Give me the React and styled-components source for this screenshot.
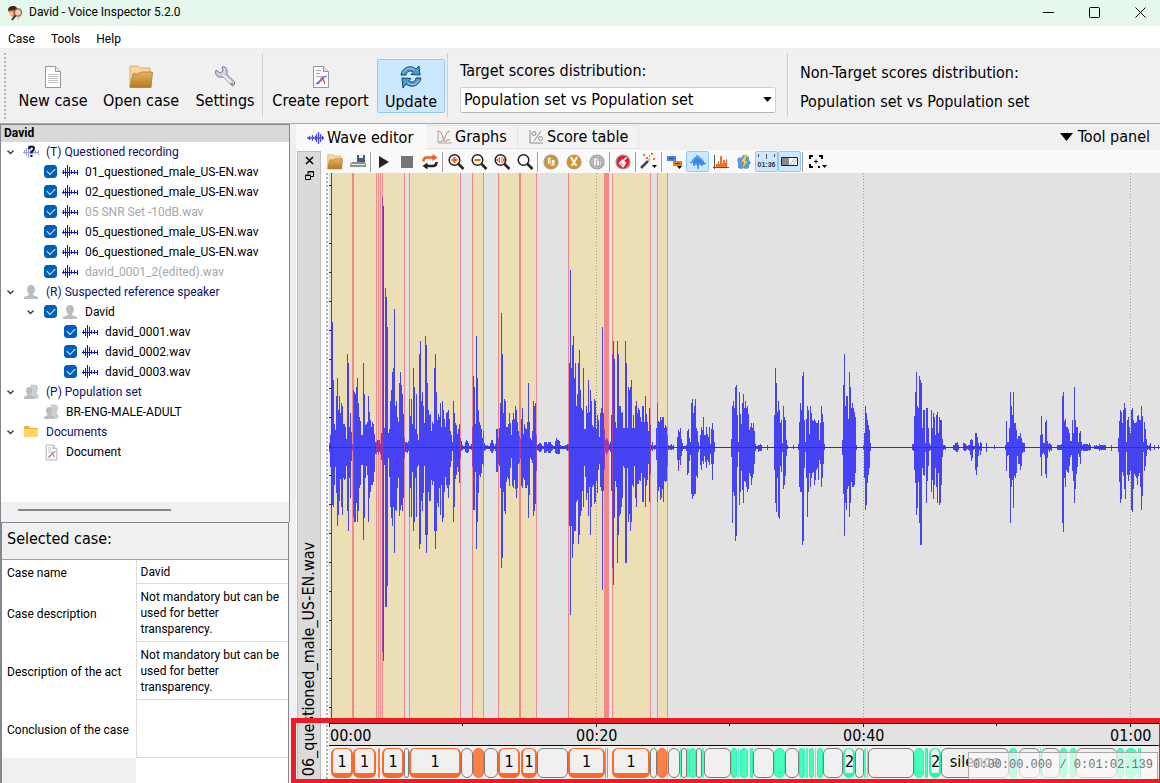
import React from 'react';
import styled, { createGlobalStyle } from 'styled-components';

const UI = 'Roboto, "Noto Sans", sans-serif';
const WIDE = '"DejaVu Sans Condensed", "Noto Sans", sans-serif';

const GlobalStyle = createGlobalStyle`
  * { box-sizing: border-box; }
  body { margin: 0; background: #f0f0f0; color: #000; font: 12px/20px ${UI}; }
  button, select, input { font: inherit; color: inherit; margin: 0; }
  svg { display: block; }
`;

/* ---------- window chrome ---------- */

const Window = styled.div`
  display: flex;
  flex-direction: column;
  min-height: 100vh;
`;

const TitleBar = styled.header`
  display: flex;
  align-items: center;
  height: 26px;
  padding-left: 7px;
  background: #e6f8ee;
`;

const Title = styled.h1`
  flex: 1;
  margin: 0 0 0 6px;
  font-size: 12px;
  font-weight: 400;
  line-height: 22px;
  padding-bottom: 2px;
`;

const WindowButton = styled.button`
  display: flex;
  align-items: center;
  justify-content: center;
  width: 46px;
  height: 24px;
  padding: 0 0 2px;
  border: 0;
  background: none;
`;

const Controls = styled.div`
  display: flex;
  margin-right: -3px;
`;

const MenuBar = styled.nav`
  display: flex;
  height: 23px;
  background: #fff;
  border-bottom: 1px solid #ececec;
`;

const MenuItem = styled.button`
  padding: 2px 8px 0;
  border: 0;
  background: none;
  line-height: 22px;
`;

const MainToolbar = styled.div`
  display: flex;
  align-items: flex-start;
  height: 75px;
  padding: 4px 0 0 4px;
  border-bottom: 1px solid #a9a9a9;
  font: 16px/20px ${WIDE};
`;

const Grip = styled.span`
  width: 2px;
  height: 66px;
  margin-right: 6px;
  background: repeating-linear-gradient(#b9b9b9 0 2px, transparent 2px 4px);
`;

const ToolButton = styled.button`
  display: flex;
  flex-direction: column;
  align-items: center;
  width: ${(p) => p.$width}px;
  height: 54px;
  margin: 6px 2px 0;
  padding: 5px 0 0;
  border: 1px solid ${(p) => (p.$pressed ? '#90c8f6' : 'transparent')};
  border-radius: 2px;
  background: ${(p) => (p.$pressed ? '#cce8ff' : 'none')};
  white-space: nowrap;
  gap: ${(p) => (p.$pressed ? 3 : 2)}px;
`;

const ToolSeparator = styled.span`
  width: 1px;
  height: 64px;
  margin: 0 3px 0 0;
  background: #cfcfcf;
`;

const ScoreGroup = styled.div`
  display: flex;
  flex-direction: column;
  padding: ${(p) => p.$top}px 11px 0 9px;
  gap: ${(p) => p.$gap}px;
  white-space: nowrap;
`;

const SelectBox = styled.div`
  position: relative;
  width: 316px;

  select {
    width: 100%;
    height: 26px;
    padding: 0 24px 0 3px;
    border: 1px solid #d0d0d0;
    border-bottom-color: #b5b5b5;
    border-radius: 3px;
    background: #fff;
    appearance: none;
  }
  svg { position: absolute; right: 4px; top: 10px; pointer-events: none; }
`;

/* ---------- left column ---------- */

const Body = styled.div`
  display: flex;
  flex: 1;
`;

const Sidebar = styled.aside`
  display: flex;
  flex-direction: column;
  flex: 0 0 290px;
`;

const TreePanel = styled.section`
  display: flex;
  flex-direction: column;
  height: 398px;
  border: solid #828790;
  border-width: 1px 1px 0;
  background: #fff;
`;

const TreeTitle = styled.h2`
  margin: 0;
  padding: 0 3px;
  height: 17px;
  background: #d9d9d9;
  font-size: 12px;
  font-weight: 700;
  line-height: 16px;
`;

const Tree = styled.ul`
  flex: 1;
  margin: 0;
  padding: 0;
  list-style: none;
`;

const TreeRow = styled.li`
  display: flex;
  align-items: center;
  height: 20px;
  padding-left: ${(p) => p.$level * 20}px;
  color: ${(p) => (p.$muted ? '#a6a6a6' : p.$heading ? '#10106e' : '#000')};
  white-space: nowrap;
`;

const Chevron = styled.button`
  display: flex;
  justify-content: center;
  width: 19px;
  padding: 0;
  border: 0;
  background: none;
  visibility: ${(p) => (p.$shown ? 'visible' : 'hidden')};
`;

const RowLabel = styled.label`
  display: flex;
  align-items: center;
`;

const IconSlot = styled.span`
  display: flex;
  width: 17px;
  margin: 0 6px 0 3px;
`;

const Check = styled.input.attrs({ type: 'checkbox' })`
  appearance: none;
  display: grid;
  place-items: center;
  width: 13px;
  height: 13px;
  border-radius: 3px;
  border: 1px solid #8a8a8a;
  && { margin: 0 2px 1px 4px; }
  &:checked { background: #005fb8; border-color: #005fb8; }
  &:checked::after {
    content: '';
    width: 7px;
    height: 4px;
    border: solid #e6f0fa;
    border-width: 0 0 1px 1px;
    transform: translateY(-1px) rotate(-45deg);
  }
`;

const ScrollBar = styled.div`
  height: 20px;
  padding: 7px 17px;
  background: #f0f0f0;
  &::before {
    content: '';
    display: block;
    width: 153px;
    height: 2px;
    background: #858585;
  }
`;

const CasePanel = styled.section`
  display: flex;
  flex-direction: column;
  flex: 1;
  margin-right: 1px;
  border: solid #828790;
  border-width: 1px 1px 0 2px;
  background: linear-gradient(90deg, #f0f0f0 134px, #fff 134px);
`;

const CaseTitle = styled.h2`
  margin: 0;
  height: 37px;
  padding: 6px 5px;
  border-bottom: 1px solid #a0a0a0;
  background: #f0f0f0;
  font: 16px/20px ${WIDE};
`;

const CaseTable = styled.table`
  width: 100%;
  border-collapse: collapse;
  table-layout: fixed;
  background: #fff;
  line-height: 16px;

  th, td {
    height: 58px;
    padding: 2px 0 0 4px;
    border: 1px solid #dcdcdc;
    border-top: 0;
    font-weight: 400;
    text-align: left;
    vertical-align: middle;
  }
  th { width: 134px; border-width: 0 1px 0 0; padding: 3px 4px 0 5px; white-space: nowrap; }
  td { border-right: 0; }
  tr:first-child th, tr:first-child td { height: 23px; }
`;

/* ---------- right column ---------- */

const Workspace = styled.main`
  position: relative;
  display: flex;
  flex-direction: column;
  flex: 1;
  min-width: 0;
  margin-left: 6px;
`;

const TabBar = styled.div`
  display: flex;
  align-items: flex-end;
  height: 27px;
  padding-bottom: 1px;
  border-bottom: 1px solid #fafafa;
  font: 16px/20px ${WIDE};
`;

const Tab = styled.button`
  display: flex;
  align-items: center;
  gap: 3px;
  width: ${(p) => p.$width}px;
  height: ${(p) => (p.$active ? 27 : 24)}px;
  margin-bottom: ${(p) => (p.$active ? -2 : 0)}px;
  padding: 0 0 0 10px;
  border: 1px solid ${(p) => (p.$active ? '#fafafa' : '#e5e5e5')};
  border-left-width: ${(p) => (p.$active ? 1 : 0)}px;
  background: ${(p) => (p.$active ? '#fafafa' : '#f3f3f3')};
  white-space: nowrap;
`;

const ToolPanelButton = styled.button`
  display: flex;
  align-items: center;
  gap: 5px;
  margin-left: auto;
  padding: 0 10px 2px 0;
  border: 0;
  background: none;
`;

const Dock = styled.div`
  display: flex;
  flex: 1;
  padding-left: 1px;
  background: #fafafa;
`;

const DockTitle = styled.div`
  display: flex;
  flex-direction: column;
  justify-content: space-between;
  align-items: center;
  width: 24px;
  padding: 2px 0 6px;
  border: 1px solid #bdbdbd;
  background: #dadada;
`;

const DockButtons = styled.div`
  display: flex;
  flex-direction: column;
  gap: 2px;
  button {
    display: flex;
    padding: 2px;
    border: 0;
    background: none;
  }
`;

const DockName = styled.span`
  writing-mode: vertical-rl;
  transform: rotate(180deg);
  font: 16px/20px ${WIDE};
  white-space: nowrap;
`;

const Editor = styled.div`
  display: flex;
  flex-direction: column;
  flex: 1;
  min-width: 0;
`;

const WaveToolbar = styled.div`
  display: flex;
  height: 22px;
  padding-left: 2px;
`;

const WaveButton = styled.button`
  display: flex;
  align-items: center;
  justify-content: center;
  width: ${(p) => (p.$menu ? 29 : 23)}px;
  height: 21px;
  padding: 0;
  border: 1px solid ${(p) => (p.$pressed ? '#90c8f6' : 'transparent')};
  border-radius: 2px;
  background: ${(p) => (p.$pressed ? '#cce8ff' : 'none')};
`;

const WaveSeparator = styled.span`
  width: 1px;
  height: 20px;
  margin: 1px;
  background: #a0a0a0;
`;

const PlotRow = styled.div`
  display: flex;
  flex: 1;
`;

const PlotGrip = styled.span`
  width: 8px;
  background: repeating-linear-gradient(#b4b4b4 0 2px, transparent 2px 4px) 5px 0 / 2px 100% no-repeat;
`;

const PlotColumn = styled.div`
  display: flex;
  flex-direction: column;
  flex: 1;
  min-width: 0;
  padding-bottom: 4px;
  background: #e2e2e2;
`;

const Plot = styled.svg`
  width: 100%;
  flex: 1 1 400px;
  min-height: 0;
`;

const Ruler = styled.div`
  position: relative;
  display: flex;
  height: 23px;
  padding-left: 1px;
  border: solid #000;
  border-width: 1px 0;
  font: 16px/24px ${WIDE};
  svg { position: absolute; left: 0; top: 0; width: 100%; height: 3px; }
`;

const RulerLabel = styled.span`
  flex: ${(p) => p.$span} 0 0;
`;

const Segments = styled.div`
  display: grid;
  grid-template-columns: ${(p) => p.$spans.map((n) => `minmax(0, ${n}fr)`).join(' ')};
  height: 33px;
  padding: 2px 0 1px 2px;
  background: #f0f0f0;
`;

const tones = {
  voice: { edge: '#fb6a2c', fill: '#fd8048' },
  other: { edge: '#2cf2ae', fill: '#46fdbb' },
  quiet: { edge: '#7b7b7b', fill: '#f0f0f0' },
};

const Segment = styled.span`
  height: 30px;
  border-style: solid;
  border-color: ${(p) => tones[p.$tone].edge};
  border-width: ${(p) => (p.$label && p.$tone !== 'quiet' ? '1px 2px 5px' : p.$span < 3 ? '0' : '1px')};
  border-radius: ${(p) => (p.$span > 8 ? 6 : p.$span > 4 ? 4 : 1)}px;
  background: ${(p) => (p.$label ? '#f0f0f0' : tones[p.$tone].fill)};
  font: 16px/26px ${WIDE};
  text-align: center;
  white-space: nowrap;
`;

const Clock = styled.output`
  position: absolute;
  right: 2px;
  bottom: 4px;
  width: 190px;
  height: 27px;
  border: 1px solid #a8a8a8;
  border-bottom: 0;
  background: rgba(250, 250, 250, 0.7);
  color: #737373;
  font: 12px/24px "Liberation Mono", monospace;
  text-align: center;
`;

const Highlight = styled.div`
  position: absolute;
  left: -5px;
  right: 0;
  bottom: 0;
  height: 65px;
  border: solid #ed1c24;
  border-width: 5px 1px 4px 5px;
  pointer-events: none;
`;

/* ---------- icons ---------- */

const AppIcon = () => (
  <svg width="16" height="16" viewBox="0 0 16 16">
    <path d="M1 5c0-3 3-4.500 6-4 2.500.5 3.500 2 3 3.500L7 6.500 2 7z" fill="#4b2416" />
    <path d="M1 6l5-1 3 3-2 4-3-1z" fill="#f08a4c" />
    <path d="M2 7l3 4 1-3z" fill="#fbd3b5" />
    <circle cx="11" cy="7.500" r="3.600" fill="#f7c9a8" stroke="#7b6a62" strokeWidth="1.300" />
    <path d="M8.500 10.500L5 15" stroke="#333" strokeWidth="2" />
    <path d="M11 12v3M13 11v2" stroke="#f4a06c" />
  </svg>
);

const Triangle = ({ width = 9, height = 5 }) => (
  <svg width={width} height={height} viewBox="0 0 10 6"><path d="M0 0h10L5 6z" fill="#000" /></svg>
);

const PageIcon = ({ chart, size = 24 }) => (
  <svg width={size} height={size} viewBox="0 0 24 24">
    <path d="M4.500 1.500h10l5 5v16h-15z" fill="#fdfdfd" stroke="#979797" />
    <path d="M14.500 1.500v5h5" fill="#e4e4e4" stroke="#979797" />
    {chart ? (
      <g fill="none">
        <path d="M7 5.500h5M7 8.500h4M7 11.500h9" stroke="#aaa" />
        <path d="M8 19q3-1 4-5t4 5" stroke="#f04848" strokeWidth="1.300" />
        <path d="M7 19l4-3q2 0 4-4l3-1" stroke="#6a6af4" strokeWidth="1.300" />
      </g>
    ) : (
      <path d="M7 9.500h10M7 11.500h10M7 13.500h10M7 15.500h10M7 17.500h10" stroke="#c4c4c4" />
    )}
  </svg>
);

const FolderIcon = ({ size = 24 }) => (
  <svg width={size} height={size} viewBox="0 0 24 24">
    <defs>
      <linearGradient id="folderFront" x1="0" y1="0" x2="0" y2="1">
        <stop offset="0" stopColor="#e2b266" /><stop offset="1" stopColor="#b87a1e" />
      </linearGradient>
    </defs>
    <path d="M1 22V1h8l2 2h10v5H5z" fill="#f3d7a3" stroke="#cfa15a" strokeWidth=".8" />
    <path d="M1 22.500L4 9h6l2-2h11.500l-1.500 15.500z" fill="url(#folderFront)" stroke="#b47a26" strokeWidth=".8" />
  </svg>
);

const WrenchIcon = () => (
  <svg width="24" height="24" viewBox="0 0 24 24">
    <path d="M3 5l4 3 3-2-1-4q4-1 5 3 .5 3-.5 4l8 8q1 3-2 4l-9-9q-7 1-8-4z" fill="#cfd2dc" stroke="#777a85" />
    <path d="M10 10l8 8" stroke="#f6f6fa" strokeWidth="1.500" />
    <circle cx="19" cy="19" r="1" fill="#777" />
  </svg>
);

const RefreshIcon = () => (
  <svg width="24" height="24" viewBox="0 0 24 24">
    <path d="M2 10C3 3 11-1 17 4l3-3 1 9-9-.5 2.500-2.500C11 5 8 6 7 10z" fill="#4c9ad2" stroke="#174467" />
    <path d="M22 13c-1 7-9 11-15 6l-3 4-1-10 9 .5L9.500 16c3.500 2 6.500 1 7.500-3z" fill="#4c9ad2" stroke="#174467" />
    <path d="M4 8c2-5 8-6 12-3M20 15c-2 5-8 6-11 3" fill="none" stroke="#9fd0ee" />
  </svg>
);

const MiniWave = ({ faded }) => (
  <svg width="16" height="16" viewBox="0 0 16 16" shapeRendering="crispEdges">
    <path
      d="M0 8h16M1.500 6v4M3.500 4v8M5.500 1v13M7.500 3v9M9.500 6v4M12.500 6v4M15.500 6v5"
      stroke={faded ? '#9a9aee' : '#1414b4'}
    />
    {faded && (
      <path d="M6 5q0-2.500 2.500-2.500t2.500 2q0 1.500-2.500 3.500v1.500M8.500 11v2" fill="none" stroke="#111" strokeWidth="2" shapeRendering="auto" />
    )}
  </svg>
);

const PersonIcon = ({ group }) => (
  <svg width="16" height="16" viewBox="0 0 16 16" fill="#bdbdbd">
    {group && <path d="M8 1h4q3 0 2.500 4L13 9l2 2v3H8z" fill="#cfcfcf" stroke="#b3b3b3" strokeWidth=".5" />}
    <path d={group
      ? 'M6 3q3 0 3 3.500 0 2-1.500 3.500v1l4.500 2v2H1v-2l3.500-2v-1Q3 9 3 6.500 3 3 6 3z'
      : 'M8 1q4 0 4 4.500Q12 8 10 10v1l5 2v2H1v-2l5-2v-1Q4 8 4 5.500 4 1 8 1z'} />
  </svg>
);

const YellowFolder = () => (
  <svg width="16" height="14" viewBox="0 0 16 14">
    <path d="M1 2q0-1 1-1h4l1 2h8v4H1z" fill="#f0b02a" />
    <path d="M1 4h14v8H1z" fill="#ffd567" />
  </svg>
);

const ChevronIcon = () => (
  <svg width="7" height="5" viewBox="0 0 7 5"><path d="M.5.5l3 3 3-3" fill="none" stroke="#333" strokeWidth="1.300" /></svg>
);

const TabWave = () => (
  <svg width="17" height="14" viewBox="0 0 17 14">
    <path d="M0 7h17M2.500 5v4M5.500 4v6M8.500 5v4M11.500 1v12M13.500 3v8M9.500 3v8M15.500 5v4" stroke="#4a4af0" strokeWidth="1.300" />
  </svg>
);

const TabGraph = () => (
  <svg width="16" height="14" viewBox="0 0 16 14" fill="none">
    <path d="M2 0v13h14" stroke="#aaa" />
    <path d="M3 1q3 2 4 7t3 3 4-1" stroke="#f06a6a" />
    <path d="M14 1q-4 1-5 6t-6 5" stroke="#6aba6a" />
  </svg>
);

const TabPercent = () => (
  <svg width="16" height="14" viewBox="0 0 16 14" fill="none" stroke="#8a8a8a">
    <path d="M2 0v13h13M13 1L6 11" />
    <circle cx="6" cy="3.500" r="2" /><circle cx="12.500" cy="8.500" r="2" />
  </svg>
);

const Lens = ({ children }) => (
  <svg width="18" height="18" viewBox="0 0 18 18" fill="none">
    <circle cx="7.500" cy="7" r="5.300" stroke="#222" strokeWidth="1.500" fill="#fff" />
    <path d="M11.500 11l5 5" stroke="#222" strokeWidth="2.500" />
    <g stroke="#fb5a14" strokeWidth="2">{children}</g>
  </svg>
);

const Disc = ({ fill, children }) => (
  <svg width="16" height="16" viewBox="0 0 16 16">
    <circle cx="8" cy="8" r="7" fill={fill} stroke="#9c9c9c" strokeWidth="1.200" />
    {children}
  </svg>
);

const icons = {
  open: <FolderIcon size={16} />,
  save: (
    <svg width="16" height="14" viewBox="0 0 16 14">
      <path d="M7 0h8v7H7z" fill="#3f5f82" /><path d="M9 0h4v3H9z" fill="#e8eef4" />
      <path d="M2 7h13l1 2v3H0V9z" fill="#8a8f94" /><path d="M1 9h14v1H1z" fill="#e8e8e8" /><path d="M10 11h3" stroke="#4be04b" />
    </svg>
  ),
  play: <svg width="12" height="14" viewBox="0 0 12 14"><path d="M1 1l10 6-10 6z" fill="#222" /></svg>,
  stop: <svg width="12" height="12" viewBox="0 0 12 12"><path d="M0 0h12v12H0z" fill="#757575" /></svg>,
  loop: (
    <svg width="16" height="16" viewBox="0 0 16 16" fill="none" strokeWidth="2.500">
      <path d="M1.500 7.500q0-4 3.500-4h6" stroke="#fb5a14" /><path d="M10.500 0v7L15.500 3.500z" fill="#fb5a14" />
      <path d="M14.500 8q0 4-3.500 4H5" stroke="#222" /><path d="M5.500 8.500v7L.5 12z" fill="#222" />
    </svg>
  ),
  zoomIn: <Lens><path d="M4.500 7h6M7.500 4v6" /></Lens>,
  zoomOut: <Lens><path d="M4.500 7h6" /></Lens>,
  zoomSelection: <Lens><path d="M6.500 4v6M9 4v6" strokeWidth="1" /><path d="M3.500 7h2M10 7h2" strokeWidth="3" /></Lens>,
  zoomAll: <Lens />,
  copy: <Disc fill="#dc931e"><path d="M4.500 3.500h4v7h-4zM7 5.500h5v6.500H7z" fill="#f5f0e2" stroke="#b89350" strokeWidth=".7" /></Disc>,
  cut: <Disc fill="#dc931e"><path d="M5 3l3 5.500L11 3M8 8v1.500" fill="none" stroke="#fff" strokeWidth="1.800" /><path d="M5.500 11.500L8 9l2.500 2.500" fill="none" stroke="#fff" strokeWidth="1.800" /></Disc>,
  paste: <Disc fill="#bebebe"><path d="M4.500 4h6v8h-6zM7.500 6h4.500v6.500H7.500z" fill="#f1f1f1" stroke="#999" strokeWidth=".7" /></Disc>,
  erase: <Disc fill="#ea1c2c"><path d="M11.500 3.500L8 7M4.500 9l3-3 3 3-2.500 3.500z" fill="#fff" stroke="#fff" strokeWidth="1.500" /><path d="M6 9.500l2 2" stroke="#ea1c2c" /></Disc>,
  wand: (
    <svg width="18" height="17" viewBox="0 0 18 17">
      <path d="M1 15L8 8" stroke="#444" strokeWidth="2.500" /><path d="M8 8l2-2" stroke="#bbb" strokeWidth="2.500" />
      <path d="M3 2h2M11 1h2M13 6h2M6 5h2M9 3h1" stroke="#fb6a2c" strokeWidth="2" /><path d="M12 12h5l-2.500 3z" fill="#000" />
    </svg>
  ),
  labels: (
    <svg width="18" height="15" viewBox="0 0 18 15">
      <path d="M1 2h9v5H1z" fill="#4a7cf2" /><path d="M7 7h9v5H7z" fill="#f07a14" />
      <path d="M3 4.500h5" stroke="#24489c" /><path d="M9 9.500h5" stroke="#8a3c00" /><path d="M11 12h5l-2.500 3z" fill="#000" />
    </svg>
  ),
  waveform: (
    <svg width="16" height="16" viewBox="0 0 16 16">
      <path d="M0 9l2-1 1-2 1 6 1-9 1 8 1-10 1 14L9 2l1 9 1-7 1 8 1-5 1 3 2-1" fill="none" stroke="#3c84e8" strokeWidth="1.300" />
    </svg>
  ),
  spectrum: (
    <svg width="16" height="16" viewBox="0 0 16 16">
      <path d="M1.500 1v14M0 13.500h16" stroke="#555" />
      <path d="M3 13v-3h2V7h1v3h1V2h2v7h1V6h2v3h1V5h1v8z" fill="#fb6a2c" />
    </svg>
  ),
  flash: (
    <svg width="16" height="16" viewBox="0 0 16 16">
      <path d="M1 6l2-3 2 1 2-3 3 1 3 1v3l2 3-2 2v3l-3 1-3-1-2 1-3-1V9z" fill="#5a96ea" />
      <path d="M9 1L5 8h3l-2 7 6-8H9l2-6z" fill="#ffd83c" stroke="#a8862a" strokeWidth=".5" />
    </svg>
  ),
  fill: (
    <svg width="17" height="9" viewBox="0 0 17 9">
      <path d="M.5.5h16v8H.5z" fill="#fff" stroke="#222" /><path d="M1 1h7v7H1z" fill="#8a8a8a" />
      <path d="M9 8l5-7M12 8l4-6" stroke="#888" strokeWidth=".7" />
    </svg>
  ),
  expand: (
    <svg width="19" height="15" viewBox="0 0 19 15" fill="none">
      <path d="M1 5V2h3M10 2h3v3M1 10v3h3M9 13h2" stroke="#000" strokeWidth="2" />
      <path d="M5 7.500h4M7 5.500v4" stroke="#000" /><path d="M13 11h5l-2.500 3z" fill="#000" />
    </svg>
  ),
};

const TimeGlyph = styled.span`
  display: flex;
  flex-direction: column;
  align-items: center;
  gap: 2px;
  font: 700 7px/8px "Liberation Sans", sans-serif;
  color: #333;
`;

const TimeIcon = () => (
  <TimeGlyph>
    <svg width="17" height="5" viewBox="0 0 17 5"><path d="M.5 0v3M8.500 0v5M16.500 0v3" stroke="#555" /></svg>
    01:36
  </TimeGlyph>
);

/* ---------- data ---------- */

const treeRows = [
  { text: '(T) Questioned recording', level: 0, heading: true, open: true, icon: <MiniWave faded /> },
  { text: '01_questioned_male_US-EN.wav', level: 1, check: true, icon: <MiniWave /> },
  { text: '02_questioned_male_US-EN.wav', level: 1, check: true, icon: <MiniWave /> },
  { text: '05 SNR Set -10dB.wav', level: 1, check: true, muted: true, icon: <MiniWave /> },
  { text: '05_questioned_male_US-EN.wav', level: 1, check: true, icon: <MiniWave /> },
  { text: '06_questioned_male_US-EN.wav', level: 1, check: true, icon: <MiniWave /> },
  { text: 'david_0001_2(edited).wav', level: 1, check: true, muted: true, icon: <MiniWave /> },
  { text: '(R) Suspected reference speaker', level: 0, heading: true, open: true, icon: <PersonIcon /> },
  { text: 'David', level: 1, check: true, open: true, icon: <PersonIcon /> },
  { text: 'david_0001.wav', level: 2, check: true, icon: <MiniWave /> },
  { text: 'david_0002.wav', level: 2, check: true, icon: <MiniWave /> },
  { text: 'david_0003.wav', level: 2, check: true, icon: <MiniWave /> },
  { text: '(P) Population set', level: 0, heading: true, open: true, icon: <PersonIcon group /> },
  { text: 'BR-ENG-MALE-ADULT', level: 1, icon: <PersonIcon group /> },
  { text: 'Documents', level: 0, heading: true, open: true, icon: <YellowFolder /> },
  { text: 'Document', level: 1, icon: <PageIcon chart size={17} /> },
];

const caseFields = [
  ['Case name', 'David'],
  ['Case description', 'Not mandatory but can be used for better transparency.'],
  ['Description of the act', 'Not mandatory but can be used for better transparency.'],
  ['Conclusion of the case', ''],
];

const waveTools = [
  ['open', 'Open'], ['save', 'Save'], null,
  ['play', 'Play'], ['stop', 'Stop'], ['loop', 'Loop'], null,
  ['zoomIn', 'Zoom in'], ['zoomOut', 'Zoom out'], ['zoomSelection', 'Zoom to selection'], ['zoomAll', 'Show all'], null,
  ['copy', 'Copy'], ['cut', 'Cut'], ['paste', 'Paste'], null,
  ['erase', 'Erase'], null,
  ['wand', 'Effects'], null,
  ['labels', 'Labels'], ['waveform', 'Waveform', true], ['spectrum', 'Spectrum'], ['flash', 'Energy'],
  ['time', 'Time axis', true], ['fill', 'Segments', true], null,
  ['expand', 'Fit view', false, true],
];

/* Each run: first column, then the peak above and below the axis per column. */
const runs = [
  [-1, '4/4 12/19 8/8'],
  [2, '125/57 67/59 23/37 17/19 51/45 69/78 37/67 51/53 34/31 44/59'],
  [12, '41/67 23/30 23/32 20/31 8/18 93/63 84/83 20/30 34/50 15/13'],
  [22, '3/3 57/69 55/74 53/74 60/55 69/74 44/63 30/40 26/37 12/17'],
  [32, '12/17 84/92 53/70 22/30 23/18 25/27 51/74 35/50 27/44 20/37'],
  [42, '25/37 23/34 13/24 5/6 5/6 7/4 7/7 7/4 3/6 14/12'],
  [52, '250/204 241/213 19/17 159/159 150/159 120/138 14/10 18/29 46/59 57/70'],
  [62, '75/78 79/59 138/105 41/62 46/63 30/40 25/30 64/68 75/62 62/57'],
  [72, '53/63 33/50 9/10 5/4 5/4 4/5 6/3 48/69 31/40 48/69'],
  [82, '23/24 79/83 60/74 18/30 53/69 13/19 7/17 93/101 106/96 46/53'],
  [92, '55/63 41/45 24/18 111/87 102/105 64/87 37/44 32/53 33/53 16/32'],
  [102, '25/37 23/33 79/83 93/101 55/83 27/55 33/59 30/40 44/67 20/37'],
  [112, '46/74 37/70 28/44 20/29 34/37 35/40 37/50 28/37 16/19 12/13'],
  [122, '5/3 46/74 34/59 24/31 22/27 13/19 18/24 23/35 9/10 6/3'],
  [132, '2/2 1/1 1/1 5/4 7/5 6/5 4/4 1/1 1/1 3/2'],
  [142, '20/19 71/62 60/62 23/24 111/101 69/74 37/45 25/27 22/29 18/25'],
  [152, '9/16 16/18 4/3 2/2 1/1 2/1 1/1 1/1 4/3 7/5'],
  [162, '7/5 4/3 1/1 3/3 18/24 18/24 9/16 19/18 44/40 134/120'],
  [172, '93/110 34/44 48/63'],
  [175, '46/66 20/34 20/29 23/31 34/38 24/20 12/10 27/38 34/40 28/32'],
  [185, '41/41 37/50 25/40 16/16 11/15 8/11 28/38 39/40 13/30 23/32'],
  [195, '19/40 18/40 25/37 64/70 25/47 9/10 7/12 16/15 46/68 41/63'],
  [205, '44/56 12/23 2/2 3/3 4/4 4/4 3/3 1/1 1/1 5/5'],
  [215, '5/5 5/4 3/3 5/5 5/5 5/5 3/3 2/2 1/1 1/1'],
  [225, '6/5 9/6 7/6 7/6 6/6 2/1 1/1 1/1 1/1 1/1'],
  [235, '2/1 2/2 3/3 3/3 84/78 177/167 79/78 102/110 111/96 69/83'],
  [245, '84/83 41/54 53/52 84/96 97/87 57/68 39/63 37/43 79/59 18/18'],
  [255, '18/29 41/52 34/45 67/68 35/39 57/87 46/59 22/39 20/37 48/56'],
  [265, '46/54 18/33 32/45 27/22 10/16 34/39 39/43 120/142 34/43 18/22'],
  [275, '7/4 9/7 8/5 6/3 3/2 5/4 32/43 93/120 106/137 88/70'],
  [285, '25/33 19/39 106/115 93/87 41/68 41/66 34/59 35/50 19/18 19/20'],
  [295, '106/115 84/115 19/20 60/74 57/66 60/83 67/74 19/37 32/39 19/18'],
  [305, '41/50 46/59 34/36 39/36 37/32 30/33 25/25 41/54 41/54 25/30'],
  [315, '51/59 33/38 25/32 16/16 39/54 22/26 2/2 5/3 1/1 2/2'],
  [325, '2/1 19/12 44/54 26/43 25/39 30/52 27/50 30/41 30/54 19/33'],
  [335, '22/34 20/33 12/18 2/2 1/1 2/2 3/2 1/1 2/2'],
  [347, '10/12 17/23 15/12 19/17 8/8 4/3 1/1 1/1 1/1 2/3'],
  [357, '16/27 18/25 9/13 5/7 44/46 48/51 34/48 41/46 48/46 19/28'],
  [367, '16/30 5/4 1/1 12/17 20/22 17/13 30/16 12/8 12/14 20/20'],
  [377, '13/12 10/14 20/17 3/6 18/16 24/32 17/16 5/4'],
  [401, '8/9 41/75 46/44 39/48 60/93 62/88 32/19 5/4 55/57 33/44'],
  [411, '23/23 44/42 53/55 39/33 46/34 39/39 41/44 33/41 17/25 20/28'],
  [421, '24/37 19/30 24/26 16/16 3/3 1/1 1/1 2/4 2/3 3/3 2/3'],
  [437, '2/2'],
  [444, '32/22 79/55 64/64 35/30 46/69 37/71 24/18 27/24 4/4 41/41'],
  [454, '30/37 27/28 7/8 2/1'],
  [463, '2/1'],
  [468, '3/2 25/39 44/44 37/44 71/97 75/93 27/20 5/4 28/30 41/69'],
  [478, '37/44 13/25 41/39 34/30 27/25 26/24 28/37 26/32 24/22 24/20'],
  [488, '27/32 7/12 24/16 41/39 33/30 25/16 3/2'],
  [512, '7/7 62/46 93/88 41/55 51/62 51/41 28/38 75/69 60/55 39/34'],
  [522, '44/39 39/39 35/37 30/25 2/2'],
  [533, '2/2 14/30 41/62 34/57 27/35 22/27 17/20 4/3'],
  [582, '3/2 3/3 31/22 55/35 75/67 41/60 39/34 71/75 67/97 64/97'],
  [592, '19/20 37/27 37/28 4/4 39/55 39/33 19/18 4/3 2/2 37/44'],
  [602, '19/32 34/51 30/37 12/20 32/39 35/55 14/25 30/57 27/55 27/37'],
  [612, '8/9 2/2 2/1 1/2'],
  [623, '2/2 2/2 4/3 4/4 5/4 2/2'],
  [633, '4/2 4/3 3/3 2/2 1/1 2/2 2/3 7/7 8/13 7/10'],
  [643, '1/2 1/1 14/22 14/27 10/19 4/8 1/2 5/7 4/3'],
  [656, '4/4'],
  [664, '2/1'],
  [675, '2/2 26/23 5/8 5/7 19/30 55/75 41/39 32/32 55/60 24/28'],
  [685, '24/30 17/25 8/8 11/16 11/16 14/22 9/18 5/5 4/4 4/4'],
  [710, '12/9 31/28 13/6 4/5 4/7 25/26 27/30 6/10 3/2 4/4 3/2 2/3'],
  [727, '2/2 2/2 2/2 2/2 3/2 51/75 55/84 26/30 28/39 20/22'],
  [737, '20/24 18/25 14/18 6/9 6/7 27/23 14/33 60/55 27/41 20/26'],
  [747, '20/19 5/6 14/9 16/16 5/3 2/2 3/3 3/3 3/3 3/3 3/3 2/2 4/3 2/2'],
  [764, '2/1 1/1 2/1 1/1 1/1 3/3 2/2 2/2 2/2 2/2 2/2 2/2'],
  [781, '2/3'],
  [788, '9/4 26/34 37/55 35/51 24/24 37/28 44/41 39/51 5/4 27/27'],
  [798, '30/33 20/27 14/23 37/62 39/64 27/41 24/26 24/28 25/30 31/37'],
  [808, '32/28 27/25 27/39 41/62 31/48 5/4 25/23 18/18 8/8 2/2 1/1 2/2 4/3'],
  [824, '2/2'],
  [828, '2/1'],
];

const AXIS = 274;
const wavePath = runs
  .map(([start, peaks]) =>
    peaks
      .split(' ')
      .map((pair, i) => {
        const [up, down] = pair.split('/').map(Number);
        return `M${start + i} ${AXIS - up}h1v${up + down + 1}h-1z`;
      })
      .join('')
  )
  .join('');

const voiced = [[1, 74], [79, 51], [142, 11], [168, 38], [238, 41], [282, 38], [327, 10]];
const marks = [
  [22, 2], [46, 1], [48, 1], [50, 1], [52, 1], [74, 1], [79, 1], [130, 1], [142, 1], [153, 1],
  [168, 1], [189, 2], [206, 1], [238, 1], [274, 5], [282, 1], [320, 1], [327, 1], [337, 1],
];
const axisTicks = Array.from({ length: 19 }, (_, i) => 12 + i * 29);

/* tone, width, label */
const segments = [
  ['voice', 22, '1'], ['voice', 23, '1'], ['gap', 2], ['voice', 2], ['gap', 2], ['voice', 22, '1'], ['quiet', 5],
  ['voice', 52, '1'], ['quiet', 12], ['voice', 11], ['quiet', 14], ['voice', 22, '1'], ['gap', 1], ['voice', 16, '1'],
  ['quiet', 31], ['voice', 37, '1'], ['voice', 1], ['gap', 1], ['voice', 1], ['gap', 4], ['voice', 38, '1'],
  ['quiet', 7], ['voice', 10], ['other', 1], ['quiet', 12], ['other', 1], ['quiet', 6], ['other', 2], ['other', 7],
  ['quiet', 6], ['other', 2], ['quiet', 27], ['other', 6], ['gap', 1], ['other', 1], ['gap', 1], ['other', 8],
  ['gap', 2], ['other', 3], ['quiet', 21], ['other', 11], ['quiet', 14], ['other', 5], ['other', 1], ['gap', 1],
  ['other', 2], ['gap', 1], ['other', 5], ['gap', 1], ['other', 1], ['gap', 1], ['other', 6], ['quiet', 20],
  ['other', 12, '2'], ['quiet', 9], ['other', 2], ['gap', 1], ['other', 1], ['quiet', 46], ['other', 10], ['gap', 1],
  ['other', 3], ['gap', 1], ['other', 12, '2'], ['quiet', 68, 'silence'], ['other', 8], ['gap', 2], ['quiet', 21],
  ['other', 1], ['quiet', 19], ['other', 7], ['gap', 3], ['other', 6], ['quiet', 41], ['other', 7], ['gap', 1],
  ['other', 12], ['gap', 1], ['other', 3], ['gap', 19],
];

/* ---------- page ---------- */

function TreeItem({ row }) {
  return (
    <TreeRow $level={row.level} $heading={row.heading} $muted={row.muted}>
      <Chevron $shown={row.open} aria-label={`Collapse ${row.text}`}><ChevronIcon /></Chevron>
      <RowLabel as={row.check ? 'label' : 'span'}>
        {row.check && <Check defaultChecked />}
        <IconSlot>{row.icon}</IconSlot>
        {row.text}
      </RowLabel>
    </TreeRow>
  );
}

function WaveView() {
  return (
    <Plot viewBox="-1 0 831 550" preserveAspectRatio="none" shapeRendering="crispEdges" role="img" aria-label="Waveform">
      {voiced.map(([x, w]) => <rect key={x} x={x} y="0" width={w} height="550" fill="#eddfb5" />)}
      <path d={wavePath} fill="#4543f4" />
      <path d={`M-1 ${AXIS}h831v1H-1z`} fill="#2e2cdc" />
      {[266, 533, 800].map((x) => (
        <path key={x} d={`M${x + 0.5} 0v550`} stroke="#6e6a60" strokeOpacity=".6" strokeDasharray="1 2" />
      ))}
      {marks.map(([x, w]) => <rect key={x} x={x} y="0" width={w} height="550" fill="#f63a5c" fillOpacity=".52" />)}
      <path d="M1.500 0v550" stroke="#5c4a58" />
      {axisTicks.map((y) => <path key={y} d={`M-1 ${y + 0.5}h3`} stroke="#333" />)}
    </Plot>
  );
}

export default function App() {
  return (
    <Window>
      <GlobalStyle />
      <TitleBar>
        <AppIcon />
        <Title>David - Voice Inspector 5.2.0</Title>
        <Controls>
          <WindowButton aria-label="Minimize">
            <svg width="11" height="11" viewBox="0 0 11 11"><path d="M0 5.500h11" stroke="#000" /></svg>
          </WindowButton>
          <WindowButton aria-label="Maximize">
            <svg width="11" height="11" viewBox="0 0 11 11"><rect x=".5" y=".5" width="10" height="10" rx="1" fill="none" stroke="#000" /></svg>
          </WindowButton>
          <WindowButton aria-label="Close">
            <svg width="11" height="11" viewBox="0 0 11 11"><path d="M.5.5l10 10M10.500.5l-10 10" stroke="#000" /></svg>
          </WindowButton>
        </Controls>
      </TitleBar>

      <MenuBar>
        <MenuItem>Case</MenuItem>
        <MenuItem>Tools</MenuItem>
        <MenuItem>Help</MenuItem>
      </MenuBar>

      <MainToolbar>
        <Grip />
        <ToolButton $width={78}><PageIcon />New case</ToolButton>
        <ToolButton $width={90}><FolderIcon />Open case</ToolButton>
        <ToolButton $width={70}><WrenchIcon />Settings</ToolButton>
        <ToolSeparator />
        <ToolButton $width={105}><PageIcon chart />Create report</ToolButton>
        <ToolButton $width={68} $pressed><RefreshIcon />Update</ToolButton>
        <ToolSeparator />
        <ScoreGroup $top={8} $gap={6}>
          <label htmlFor="target">Target scores distribution:</label>
          <SelectBox>
            <select id="target"><option>Population set vs Population set</option></select>
            <Triangle />
          </SelectBox>
        </ScoreGroup>
        <ToolSeparator />
        <ScoreGroup $top={10} $gap={9}>
          <span>Non-Target scores distribution:</span>
          <span>Population set vs Population set</span>
        </ScoreGroup>
      </MainToolbar>

      <Body>
        <Sidebar>
          <TreePanel>
            <TreeTitle>David</TreeTitle>
            <Tree>{treeRows.map((row) => <TreeItem key={row.text} row={row} />)}</Tree>
            <ScrollBar />
          </TreePanel>
          <CasePanel>
            <CaseTitle>Selected case:</CaseTitle>
            <CaseTable>
              <tbody>
                {caseFields.map(([name, value]) => (
                  <tr key={name}><th scope="row">{name}</th><td>{value}</td></tr>
                ))}
              </tbody>
            </CaseTable>
          </CasePanel>
        </Sidebar>

        <Workspace>
          <TabBar>
            <Tab $active $width={130}><TabWave />Wave editor</Tab>
            <Tab $width={92}><TabGraph />Graphs</Tab>
            <Tab $width={121}><TabPercent />Score table</Tab>
            <ToolPanelButton><Triangle width={13} height={8} />Tool panel</ToolPanelButton>
          </TabBar>
          <Dock>
            <DockTitle>
              <DockButtons>
                <button aria-label="Close panel">
                  <svg width="9" height="9" viewBox="0 0 9 9"><path d="M1 1l7 7M8 1L1 8" stroke="#000" strokeWidth="1.500" /></svg>
                </button>
                <button aria-label="Float panel">
                  <svg width="9" height="9" viewBox="0 0 9 9" fill="none" stroke="#000"><path d="M.5 4.500h5v4h-5zM.5 4h5M3 3V.5h5.500v5H6M3 1h5" /></svg>
                </button>
              </DockButtons>
              <DockName>06_questioned_male_US-EN.wav</DockName>
            </DockTitle>
            <Editor>
              <WaveToolbar>
                {waveTools.map((tool, i) =>
                  tool ? (
                    <WaveButton key={tool[0]} aria-label={tool[1]} $pressed={tool[2]} $menu={tool[3]}>
                      {tool[0] === 'time' ? <TimeIcon /> : icons[tool[0]]}
                    </WaveButton>
                  ) : (
                    <WaveSeparator key={i} />
                  )
                )}
              </WaveToolbar>
              <PlotRow>
                <PlotGrip />
                <PlotColumn>
                  <WaveView />
                  <Ruler>
                    <svg viewBox="-1 0 831 3" preserveAspectRatio="none" shapeRendering="crispEdges">
                      <path d="M-.5 0v3M132.500 0v2M266.500 0v3M399.500 0v2M533.500 0v3M666.500 0v2M800.500 0v3" stroke="#000" />
                    </svg>
                    <RulerLabel $span={246}>00:00</RulerLabel>
                    <RulerLabel $span={267}>00:20</RulerLabel>
                    <RulerLabel $span={267}>00:40</RulerLabel>
                    <RulerLabel $span={50}>01:00</RulerLabel>
                  </Ruler>
                  <Segments $spans={segments.map(([, span]) => span)}>
                    {segments.map(([tone, span, label], i) =>
                      tone === 'gap' ? (
                        <span key={i} />
                      ) : (
                        <Segment key={i} $tone={tone} $span={span} $label={label}>{label}</Segment>
                      )
                    )}
                  </Segments>
                </PlotColumn>
              </PlotRow>
            </Editor>
          </Dock>
          <Clock>0:00:00.000 / 0:01:02.139</Clock>
          <Highlight />
        </Workspace>
      </Body>
    </Window>
  );
}
